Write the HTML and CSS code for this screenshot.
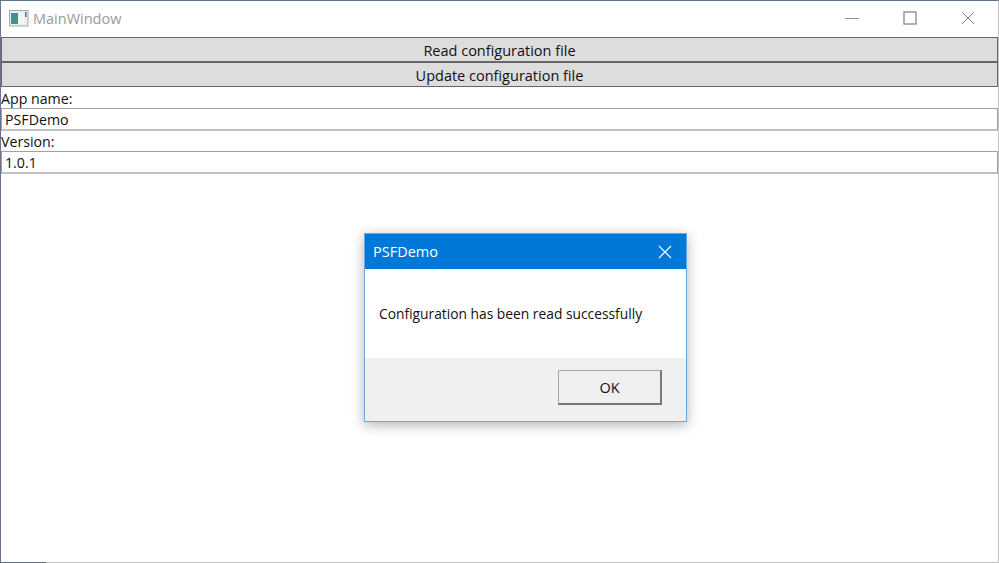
FILE: index.html
```html
<!DOCTYPE html>
<html lang="en">
<head>
<meta charset="utf-8">
<title>MainWindow</title>
<link rel="stylesheet" href="styles.css">
</head>
<body>
<div class="window">
  <header class="titlebar">
    <svg class="app-icon" width="20" height="17" viewBox="0 0 20 17">
      <defs><linearGradient id="g" x1="0" y1="0" x2="0" y2="1"><stop offset="0" stop-color="#4a86a8"/><stop offset="1" stop-color="#35a06a"/></linearGradient></defs>
      <rect x="0.5" y="0.5" width="18.5" height="15.5" fill="#eceef0" stroke="#a3a8ad"/>
      <rect x="2" y="3" width="7" height="11" fill="url(#g)"/>
      <rect x="10" y="3" width="5" height="11" fill="#f4f4f4"/>
      <rect x="16" y="2" width="1.5" height="5" fill="#5a7278"/>
    </svg>
    <span class="title">MainWindow</span>
    <div class="controls">
      <svg class="ctl ctl-min" width="14" height="14" viewBox="0 0 14 14"><path d="M0 7.5H14" stroke="#8c8c8c" stroke-width="1" fill="none"/></svg>
      <svg class="ctl ctl-max" width="14" height="14" viewBox="0 0 14 14"><rect x="1" y="1" width="12" height="12" stroke="#8f8f8f" stroke-width="1.4" fill="none"/></svg>
      <svg class="ctl ctl-close" width="14" height="14" viewBox="0 0 14 14"><path d="M1 1L13 13M13 1L1 13" stroke="#8c8c8c" stroke-width="1" fill="none"/></svg>
    </div>
  </header>
  <main class="content">
    <button class="action" type="button">Read configuration file</button>
    <button class="action" type="button">Update configuration file</button>
    <label class="label">App name:</label>
    <div class="field">PSFDemo</div>
    <label class="label">Version:</label>
    <div class="field">1.0.1</div>
  </main>
</div>
<div class="bottom-strip"></div>
<section class="dialog">
  <div class="dialog-head">
    <span>PSFDemo</span>
    <svg width="14" height="14" viewBox="0 0 14 14"><path d="M1 1L13 13M13 1L1 13" stroke="#fff" stroke-width="1.2" fill="none"/></svg>
  </div>
  <div class="dialog-body">Configuration has been read successfully</div>
  <div class="dialog-foot"><button class="ok" type="button">OK</button></div>
</section>
</body>
</html>
```
FILE: styles.css
```css
* { box-sizing: border-box; }
html, body { margin: 0; height: 563px; overflow: hidden; background: #fff; }
body { font-family: "Open Sans", "Noto Sans", sans-serif; color: #111; position: relative; }
.window { height: 562px; border-top: 1px solid #5f7388; border-left: 1px solid #6b7590; border-right: 1px solid #c4c4c4; display: flex; flex-direction: column; }
.titlebar { height: 36px; flex: none; display: flex; align-items: center; padding-left: 8px; }
.app-icon { flex: none; margin-right: 4px; margin-top: -1px; }
.title { font-size: 14.5px; color: #9a9a9a; margin-top: -1px; }
.controls { margin-left: auto; display: flex; align-items: center; margin-top: -2px; padding-right: 23px; gap: 44px; }
.ctl { display: block; }
.content { display: flex; flex-direction: column; }
.action { height: 25px; padding: 2px 0 0; background: #dddddd; border: 1px solid #666; font: inherit; font-size: 14.5px; line-height: 22px; color: #111; }
.label { height: 21px; font-size: 14.2px; line-height: 23px; }
.field + .label { height: 20px; line-height: 22px; }
.field { height: 23px; border: 1px solid #a0a0a8; border-bottom: 2px solid #c0c0c6; padding-left: 3px; font-size: 14.2px; line-height: 21px; }
.bottom-strip { height: 1px; background: linear-gradient(to right, #5f6880 46px, #c4c4c4 46px); }
.dialog { position: absolute; left: 364px; top: 233px; width: 323px; height: 189px; border: 1px solid #6aa9e0; background: #fff; box-shadow: 0 3px 12px rgba(0,0,0,.3); display: flex; flex-direction: column; }
.dialog-head { height: 35px; flex: none; background: #0078d7; color: #fff; display: flex; align-items: center; justify-content: space-between; padding: 0 14px 0 8px; font-size: 14.5px; }
.dialog-body { flex: none; height: 89px; padding: 0 14px; display: flex; align-items: center; font-size: 13.8px; color: #111; }
.dialog-foot { flex: 1; background: #f0f0f0; display: flex; justify-content: flex-end; align-items: flex-start; padding: 12px 24px 0 0; }
.ok { width: 104px; height: 35px; background: #efefef; border: 1px solid #a8a8a8; border-right: 2px solid #777; border-bottom: 2px solid #777; font: inherit; font-size: 14.5px; color: #111; padding: 0; }
```
